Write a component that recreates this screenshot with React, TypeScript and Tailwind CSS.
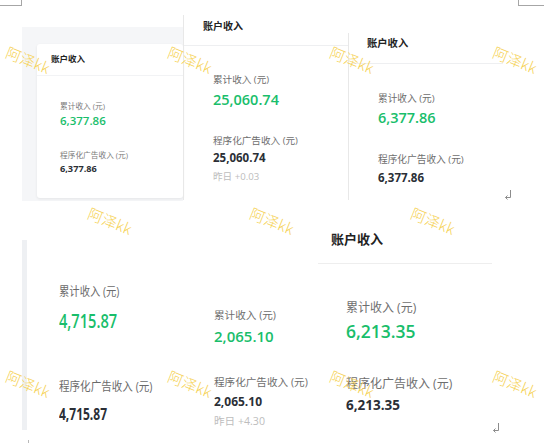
import React from "react";

const Ret = ({ className = "" }: { className?: string }) => (
  <svg className={className} width="8" height="12" viewBox="0 0 8 12" fill="none" stroke="#8c8c8c" strokeWidth="1">
    <path d="M6.5 1V8.5H1.5M3.5 6.5L1.5 8.5L3.5 10.5" />
  </svg>
);

const marks: [number, number][] = [
  [28, 59.5], [190, 59.5], [352, 59.5], [515, 59.5],
  [110, 221], [272, 221], [433, 221],
  [28, 383.5], [190, 383.5], [352, 383.5], [515, 383.5],
];

export default function App() {
  return (
    <div className="relative w-[544px] h-[443px] overflow-hidden bg-white font-['Open_Sans','Noto_Sans_CJK_SC',sans-serif]">
      {/* document corner marks */}
      <div className="absolute left-0 top-0 w-[22px] h-[6px] border-r border-b border-[#a6a6a6]" />
      <div className="absolute left-[518px] top-0 w-[26px] h-[6px] border-l border-b border-[#a6a6a6]" />

      {/* top row */}
      <div className="flex items-start h-[205px] pl-[22px]">
        {/* panel 1 */}
        <div className="mt-[27px] w-[161px] h-[174px] bg-[#f5f6f8] pl-[15px] pt-[17px]">
          <div className="w-[146px] h-[154px] bg-white rounded-[3px] shadow-[0_1px_3px_rgba(0,0,0,0.07)]">
            <div className="h-[32px] border-b border-[#f2f3f5] flex items-center pl-[14px] text-[8.5px] font-bold text-[#222] leading-none">
              账户收入
            </div>
            <div className="pl-[23px]">
              <div className="mt-[24.5px] text-[7.7px] leading-[10px] text-[#7a7a7a]">累计收入 (元)</div>
              <div className="mt-[3px] text-[11.5px] leading-[14px] font-semibold text-[#19be6b]">6,377.86</div>
              <div className="mt-[22.5px] text-[7.7px] leading-[10px] text-[#7a7a7a]">程序化广告收入 (元)</div>
              <div className="mt-[3px] text-[9.2px] leading-[12px] font-bold text-[#2b2f36]">6,377.86</div>
            </div>
          </div>
        </div>

        {/* panel 2 */}
        <div className="mt-[15px] w-[165px] h-[185px] border-l border-[#e8e8e8]">
          <div className="h-[31px] pt-[4px] pl-[19px] border-b border-[#eeeff1]">
            <div className="text-[10px] leading-[14px] font-bold text-[#222]">账户收入</div>
          </div>
          <div className="pl-[29px]">
            <div className="mt-[28px] text-[9.6px] leading-[12px] text-[#6e6e6e]">累计收入 (元)</div>
            <div className="mt-[4.5px] text-[14.5px] leading-[18px] font-semibold text-[#19be6b]">25,060.74</div>
            <div className="mt-[26.5px] text-[9.6px] leading-[12px] text-[#6e6e6e]">程序化广告收入 (元)</div>
            <div className="mt-[3.5px] text-[11.5px] leading-[14px] font-bold text-[#2b2f36]">25,060.74</div>
            <div className="mt-[6px] text-[9.6px] leading-[12px] text-[#bdbdbd]">昨日 +0.03</div>
          </div>
        </div>

        {/* panel 3 */}
        <div className="mt-[33px] w-[155px] h-[167px] border-l border-[#e8e8e8]">
          <div className="h-[31px] pt-[3px] pl-[18px] border-b border-[#eeeff1]">
            <div className="text-[10.3px] leading-[14px] font-bold text-[#222]">账户收入</div>
          </div>
          <div className="pl-[29px]">
            <div className="mt-[29px] text-[9.7px] leading-[12px] text-[#6e6e6e]">累计收入 (元)</div>
            <div className="mt-[4px] text-[14.5px] leading-[18px] font-semibold text-[#19be6b]">6,377.86</div>
            <div className="mt-[27px] text-[9.7px] leading-[12px] text-[#6e6e6e]">程序化广告收入 (元)</div>
            <div className="mt-[4.5px] text-[11.5px] leading-[14px] font-bold text-[#2b2f36]">6,377.86</div>
          </div>
        </div>

        <Ret className="mt-[189px] ml-[1px]" />
      </div>

      {/* bottom row */}
      <div className="flex items-start pl-[22px]">
        {/* panel 4 */}
        <div className="w-[178px] flex flex-col">
          <div className="mt-[35px] flex items-start">
            <div className="w-[5px] h-[190px] bg-[#eef0f3]" />
            <div className="ml-[32px] whitespace-nowrap">
              <div className="mt-[44px] text-[12px] leading-[16px] text-[#6a6a6a] scale-x-[0.86] origin-left">累计收入 (元)</div>
              <div className="mt-[8.5px] text-[19px] leading-[24px] font-semibold text-[#19be6b] scale-x-[0.77] origin-left">4,715.87</div>
              <div className="mt-[46px] text-[12px] leading-[16px] text-[#6a6a6a] scale-x-[0.88] origin-left">程序化广告收入 (元)</div>
              <div className="mt-[9px] text-[16px] leading-[20px] font-bold text-[#2b2f36] scale-x-[0.75] origin-left">4,715.87</div>
            </div>
          </div>
          <Ret className="mt-[9px] opacity-60" />
        </div>

        {/* panel 5 */}
        <div className="w-[118px] pl-[14px] whitespace-nowrap">
          <div className="mt-[103px] text-[10.6px] leading-[14px] text-[#6e6e6e]">累计收入 (元)</div>
          <div className="mt-[4px] text-[15px] leading-[20px] font-semibold text-[#19be6b]">2,065.10</div>
          <div className="mt-[29px] text-[10.6px] leading-[14px] text-[#6e6e6e]">程序化广告收入 (元)</div>
          <div className="mt-[4.5px] text-[12px] leading-[16px] font-bold text-[#2b2f36]">2,065.10</div>
          <div className="mt-[4.5px] text-[10.6px] leading-[14px] text-[#bdbdbd]">昨日 +4.30</div>
        </div>

        {/* panel 6 */}
        <div className="mt-[19px] w-[174px]">
          <div className="h-[40px] pt-[5.5px] pl-[13px] border-b border-[#eeeeee]">
            <div className="text-[13px] leading-[18px] font-bold text-[#222]">账户收入</div>
          </div>
          <div className="pl-[28px] whitespace-nowrap">
            <div className="mt-[35.5px] text-[12px] leading-[16px] text-[#6e6e6e]">累计收入 (元)</div>
            <div className="mt-[4px] text-[17.5px] leading-[22px] font-semibold text-[#19be6b]">6,213.35</div>
            <div className="mt-[34px] text-[12px] leading-[16px] text-[#6e6e6e]">程序化广告收入 (元)</div>
            <div className="mt-[4.5px] text-[13.5px] leading-[18px] font-bold text-[#2b2f36]">6,213.35</div>
          </div>
        </div>

        <Ret className="mt-[217px]" />
      </div>

      {/* watermarks */}
      {marks.map(([x, y], i) => (
        <div
          key={i}
          className="absolute whitespace-nowrap text-[15px] leading-[18px] font-light text-[#f6d35a] -translate-x-1/2 -translate-y-1/2 rotate-[22deg] pointer-events-none font-['Noto_Sans_CJK_SC',sans-serif]"
          style={{ left: x, top: y }}
        >
          阿泽kk
        </div>
      ))}
    </div>
  );
}
